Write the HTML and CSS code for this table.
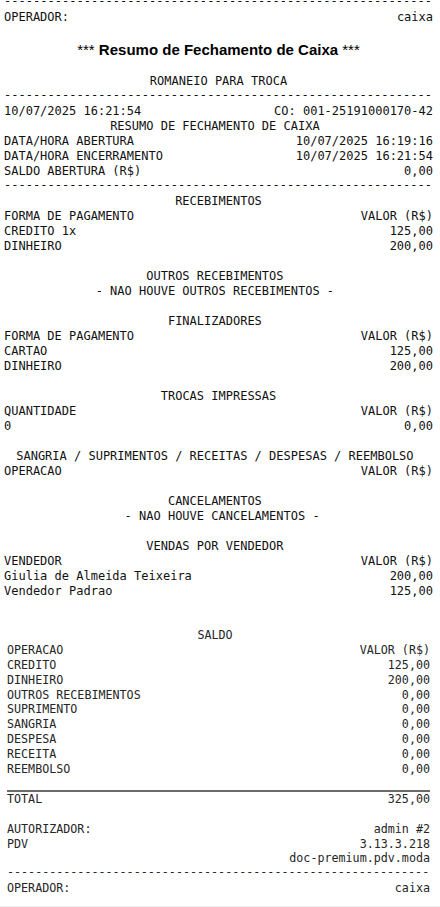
FILE: index.html
```html
<!DOCTYPE html>
<html lang="pt-BR">
<head>
<meta charset="utf-8">
<title>Resumo de Fechamento de Caixa</title>
<link rel="stylesheet" href="styles.css">
</head>
<body>
<div class="receipt">
  <div class="dash dash-first">-----------------------------------------------------------</div>
  <div class="row"><span>OPERADOR:</span><span>caixa</span></div>
  <h1 class="title"><span class="stars">***</span> Resumo de Fechamento de Caixa <span class="stars">***</span></h1>
  <div class="center">ROMANEIO PARA TROCA</div>
  <div class="dash">-----------------------------------------------------------</div>
  <div class="row"><span>10/07/2025 16:21:54</span><span>CO: 001-25191000170-42</span></div>
  <div class="center">RESUMO DE FECHAMENTO DE CAIXA </div>
  <div class="row"><span>DATA/HORA ABERTURA</span><span>10/07/2025 16:19:16</span></div>
  <div class="row"><span>DATA/HORA ENCERRAMENTO</span><span>10/07/2025 16:21:54</span></div>
  <div class="row"><span>SALDO ABERTURA (R$)</span><span>0,00</span></div>
  <div class="dash">-----------------------------------------------------------</div>

  <div class="center">RECEBIMENTOS</div>
  <div class="row"><span>FORMA DE PAGAMENTO</span><span>VALOR (R$)</span></div>
  <div class="row"><span>CREDITO 1x</span><span>125,00</span></div>
  <div class="row"><span>DINHEIRO</span><span>200,00</span></div>
  <div class="blank"></div>

  <div class="center">OUTROS RECEBIMENTOS </div>
  <div class="center">- NAO HOUVE OUTROS RECEBIMENTOS - </div>
  <div class="blank"></div>

  <div class="center">FINALIZADORES </div>
  <div class="row"><span>FORMA DE PAGAMENTO</span><span>VALOR (R$)</span></div>
  <div class="row"><span>CARTAO</span><span>125,00</span></div>
  <div class="row"><span>DINHEIRO</span><span>200,00</span></div>
  <div class="blank"></div>

  <div class="center">TROCAS IMPRESSAS</div>
  <div class="row"><span>QUANTIDADE</span><span>VALOR (R$)</span></div>
  <div class="row"><span>0</span><span>0,00</span></div>
  <div class="blank"></div>

  <div class="center">SANGRIA / SUPRIMENTOS / RECEITAS / DESPESAS / REEMBOLSO </div>
  <div class="row"><span>OPERACAO</span><span>VALOR (R$)</span></div>
  <div class="blank"></div>

  <div class="center">CANCELAMENTOS </div>
  <div class="center"> - NAO HOUVE CANCELAMENTOS -</div>
  <div class="blank"></div>

  <div class="center">VENDAS POR VENDEDOR </div>
  <div class="row"><span>VENDEDOR</span><span>VALOR (R$)</span></div>
  <div class="row"><span>Giulia de Almeida Teixeira</span><span>200,00</span></div>
  <div class="row"><span>Vendedor Padrao</span><span>125,00</span></div>

  <div class="summary">
    <div class="center">SALDO </div>
    <div class="row"><span>OPERACAO</span><span>VALOR (R$)</span></div>
    <div class="row"><span>CREDITO</span><span>125,00</span></div>
    <div class="row"><span>DINHEIRO</span><span>200,00</span></div>
    <div class="row"><span>OUTROS RECEBIMENTOS</span><span>0,00</span></div>
    <div class="row"><span>SUPRIMENTO</span><span>0,00</span></div>
    <div class="row"><span>SANGRIA</span><span>0,00</span></div>
    <div class="row"><span>DESPESA</span><span>0,00</span></div>
    <div class="row"><span>RECEITA</span><span>0,00</span></div>
    <div class="row"><span>REEMBOLSO</span><span>0,00</span></div>
    <div class="rule"></div>
    <div class="row"><span>TOTAL</span><span>325,00</span></div>
    <div class="blank"></div>
    <div class="row"><span>AUTORIZADOR:</span><span>admin #2</span></div>
    <div class="row"><span>PDV</span><span>3.13.3.218</span></div>
    <div class="row"><span></span><span>doc-premium.pdv.moda</span></div>
    <div class="dash">------------------------------------------------------------</div>
    <div class="row"><span>OPERADOR:</span><span>caixa</span></div>
  </div>
</div>
</body>
</html>
```

FILE: styles.css
```css
html {
  background: #f0f0f0;
}

body {
  margin: 0;
  background: #f0f0f0;
}

.receipt {
  background: #ffffff;
  padding: 0 7px 10px 4px;
  font-family: "DejaVu Sans Mono", "Liberation Mono", monospace;
  font-size: 12px;
  line-height: 15px;
  color: #111111;
}

.row {
  display: flex;
  justify-content: space-between;
  white-space: pre;
  height: 15px;
}

.center {
  text-align: center;
  white-space: pre;
  height: 15px;
}

.blank {
  height: 15px;
}

.dash {
  height: 15px;
  line-height: 12px;
  white-space: nowrap;
  letter-spacing: 0.03px;
}

.dash-first {
  margin-top: -5px;
}

.title {
  margin: 15px 0 14px;
  font-family: "Liberation Sans", Arial, sans-serif;
  font-size: 15px;
  line-height: 20px;
  font-weight: bold;
  text-align: center;
  color: #000000;
}

.stars {
  font-weight: normal;
}

.summary {
  margin-top: 29px;
  padding: 0 3px;
  font-size: 11.7px;
  line-height: 14.9px;
  color: #262626;
}

.summary .row,
.summary .center,
.summary .blank,
.summary .dash {
  height: 14.9px;
}

.summary .dash {
  line-height: 12px;
  letter-spacing: 0;
}

.rule {
  height: 15px;
  box-sizing: border-box;
  border-bottom: 2px solid #6a6a6a;
}
```
